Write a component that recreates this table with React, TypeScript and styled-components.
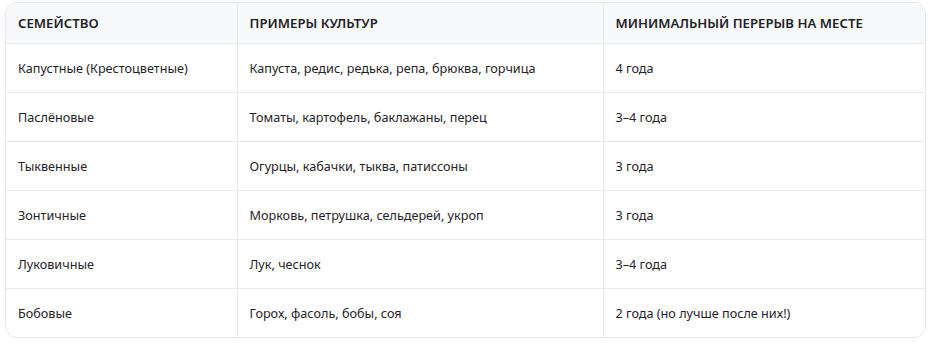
import React from 'react'
import styled, { createGlobalStyle } from 'styled-components'

const rows = [
  ['Капустные (Крестоцветные)', 'Капуста, редис, редька, репа, брюква, горчица', '4 года'],
  ['Паслёновые', 'Томаты, картофель, баклажаны, перец', '3–4 года'],
  ['Тыквенные', 'Огурцы, кабачки, тыква, патиссоны', '3 года'],
  ['Зонтичные', 'Морковь, петрушка, сельдерей, укроп', '3 года'],
  ['Луковичные', 'Лук, чеснок', '3–4 года'],
  ['Бобовые', 'Горох, фасоль, бобы, соя', '2 года (но лучше после них!)'],
]

export const App = () => {
  return (
    <>
      <GlobalStyle />
      <Page>
        <Card>
          <Table>
            <colgroup>
              <col style={{ width: '231px' }} />
              <col style={{ width: '366px' }} />
              <col />
            </colgroup>
            <thead>
              <tr>
                <Th>Семейство</Th>
                <Th>Примеры культур</Th>
                <Th>Минимальный перерыв на месте</Th>
              </tr>
            </thead>
            <tbody>
              {rows.map((row) => (
                <Tr key={row[0]}>
                  {row.map((cell, i) => (
                    <Td key={i}>{cell}</Td>
                  ))}
                </Tr>
              ))}
            </tbody>
          </Table>
        </Card>
      </Page>
    </>
  )
}

export default App

const GlobalStyle = createGlobalStyle`
  body {
    margin: 0;
    background: #fff;
    font-family: 'Noto Sans', 'Open Sans', sans-serif;
  }
`

const Page = styled.div`
  padding: 2px 4px 0 5px;
`

const Card = styled.div`
  border: 1px solid #e5e7eb;
  border-radius: 12px;
  overflow: hidden;
  width: 919px;
`

const Table = styled.table`
  width: 100%;
  border-collapse: collapse;
  table-layout: fixed;
`

const Th = styled.th`
  height: 40px;
  padding: 0 12px;
  text-align: left;
  font-size: 13.2px;
  font-weight: 600;
  text-transform: uppercase;
  color: #1f2328;
  background: #f8f9fb;
  border-bottom: 1px solid #e8eaef;
  & + & {
    border-left: 1px solid #e8eaef;
  }
`

const Tr = styled.tr`
  & + & td {
    border-top: 1px solid #e8eaef;
  }
`

const Td = styled.td`
  height: 48px;
  padding: 0 12px;
  font-size: 12.65px;
  color: #1f2328;
  & + & {
    border-left: 1px solid #e8eaef;
  }
`
